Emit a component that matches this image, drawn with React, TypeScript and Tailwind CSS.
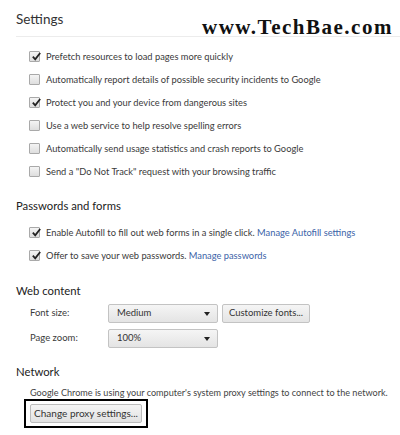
const font = { fontFamily: 'Lato, "Open Sans", Arial, sans-serif' };

function Checkbox({ checked }: { checked: boolean }) {
  return (
    <span className="relative flex h-[11px] w-[11px] shrink-0 items-center justify-center rounded-[1px] border border-[#a9a9a9] bg-gradient-to-b from-[#f4f4f4] to-[#dedede]">
      {checked && (
        <svg viewBox="0 0 12 12" className="absolute -top-[1px] left-[1px] h-[11px] w-[11px]">
          <path d="M2 6.2 L4.6 9 L10 2.2" fill="none" stroke="#222" strokeWidth="2" />
        </svg>
      )}
    </span>
  );
}

function Row({ checked, children }: { checked: boolean; children: React.ReactNode }) {
  return (
    <div className="flex h-[23px] items-center gap-[6px] pl-[29px] text-[9.3px] text-[#3a3a3a]">
      <Checkbox checked={checked} />
      <span className="whitespace-nowrap">{children}</span>
    </div>
  );
}

function Select({ value }: { value: string }) {
  return (
    <div className="flex h-[19px] w-[110px] items-center justify-between rounded-[2px] border border-[#c3c3c3] bg-gradient-to-b from-[#f5f5f5] to-[#e4e4e4] pl-[8px] pr-[7px] text-[9.5px] text-[#333]">
      <span>{value}</span>
      <span className="h-0 w-0 border-x-[3.5px] border-t-[4px] border-x-transparent border-t-[#222]" />
    </div>
  );
}

function Section({ title }: { title: string }) {
  return <div className="flex h-[20px] items-center pl-[16px] text-[11.3px] text-[#222]">{title}</div>;
}

export default function App() {
  return (
    <div className="relative h-[435px] w-[400px] overflow-hidden bg-white" style={font}>
      {/* Watermark */}
      <div
        className="absolute left-[202px] top-[12px] whitespace-nowrap text-[21px] font-bold tracking-[1.5px] text-[#111]"
        style={{ fontFamily: '"Liberation Serif", "Times New Roman", serif' }}
      >
        www.TechBae.com
      </div>

      <div className="ml-[16px] flex h-[37px] items-end border-b border-[#ececec] pb-[8px]">
        <span className="text-[13.5px] leading-[18px] text-[#333]">Settings</span>
      </div>

      <div className="pt-[8px]">
        <Row checked>Prefetch resources to load pages more quickly</Row>
        <Row checked={false}>Automatically report details of possible security incidents to Google</Row>
        <Row checked>Protect you and your device from dangerous sites</Row>
        <Row checked={false}>Use a web service to help resolve spelling errors</Row>
        <Row checked={false}>Automatically send usage statistics and crash reports to Google</Row>
        <Row checked={false}>Send a "Do Not Track" request with your browsing traffic</Row>
      </div>

      <div className="mt-[13px]">
        <Section title="Passwords and forms" />
        <div className="mt-[5px]">
          <Row checked>
            Enable Autofill to fill out web forms in a single click.{' '}
            <span className="text-[#3b63a8]">Manage Autofill settings</span>
          </Row>
          <Row checked>
            Offer to save your web passwords. <span className="text-[#3b63a8]">Manage passwords</span>
          </Row>
        </div>
      </div>

      <div className="mt-[14px]">
        <Section title="Web content" />
        <div className="flex h-[25px] items-center pl-[30px] text-[9.5px] text-[#3a3a3a]">
          <span className="w-[78px]">Font size:</span>
          <Select value="Medium" />
          <button className="ml-[4px] flex h-[19px] w-[88px] items-center justify-center rounded-[2px] border border-[#c3c3c3] bg-gradient-to-b from-[#f5f5f5] to-[#e4e4e4] text-[9.5px] text-[#333]">
            Customize fonts...
          </button>
        </div>
        <div className="flex h-[25px] items-center pl-[30px] text-[9.5px] text-[#3a3a3a]">
          <span className="w-[78px]">Page zoom:</span>
          <Select value="100%" />
        </div>
      </div>

      <div className="mt-[11px]">
        <Section title="Network" />
        <div className="mt-[3px] whitespace-nowrap pl-[30px] text-[9.1px] leading-[16px] text-[#444]">
          Google Chrome is using your computer's system proxy settings to connect to the network.
        </div>
        <div className="ml-[24px] mt-[-2px] flex h-[29px] w-[124px] items-center justify-center border-[2.5px] border-black bg-white">
          <button className="flex h-[19px] w-[112px] items-center justify-center rounded-[2px] border border-[#bcbcbc] bg-gradient-to-b from-[#f5f5f5] to-[#e2e2e2] text-[10px] text-[#333]">
            Change proxy settings...
          </button>
        </div>
      </div>
    </div>
  );
}
